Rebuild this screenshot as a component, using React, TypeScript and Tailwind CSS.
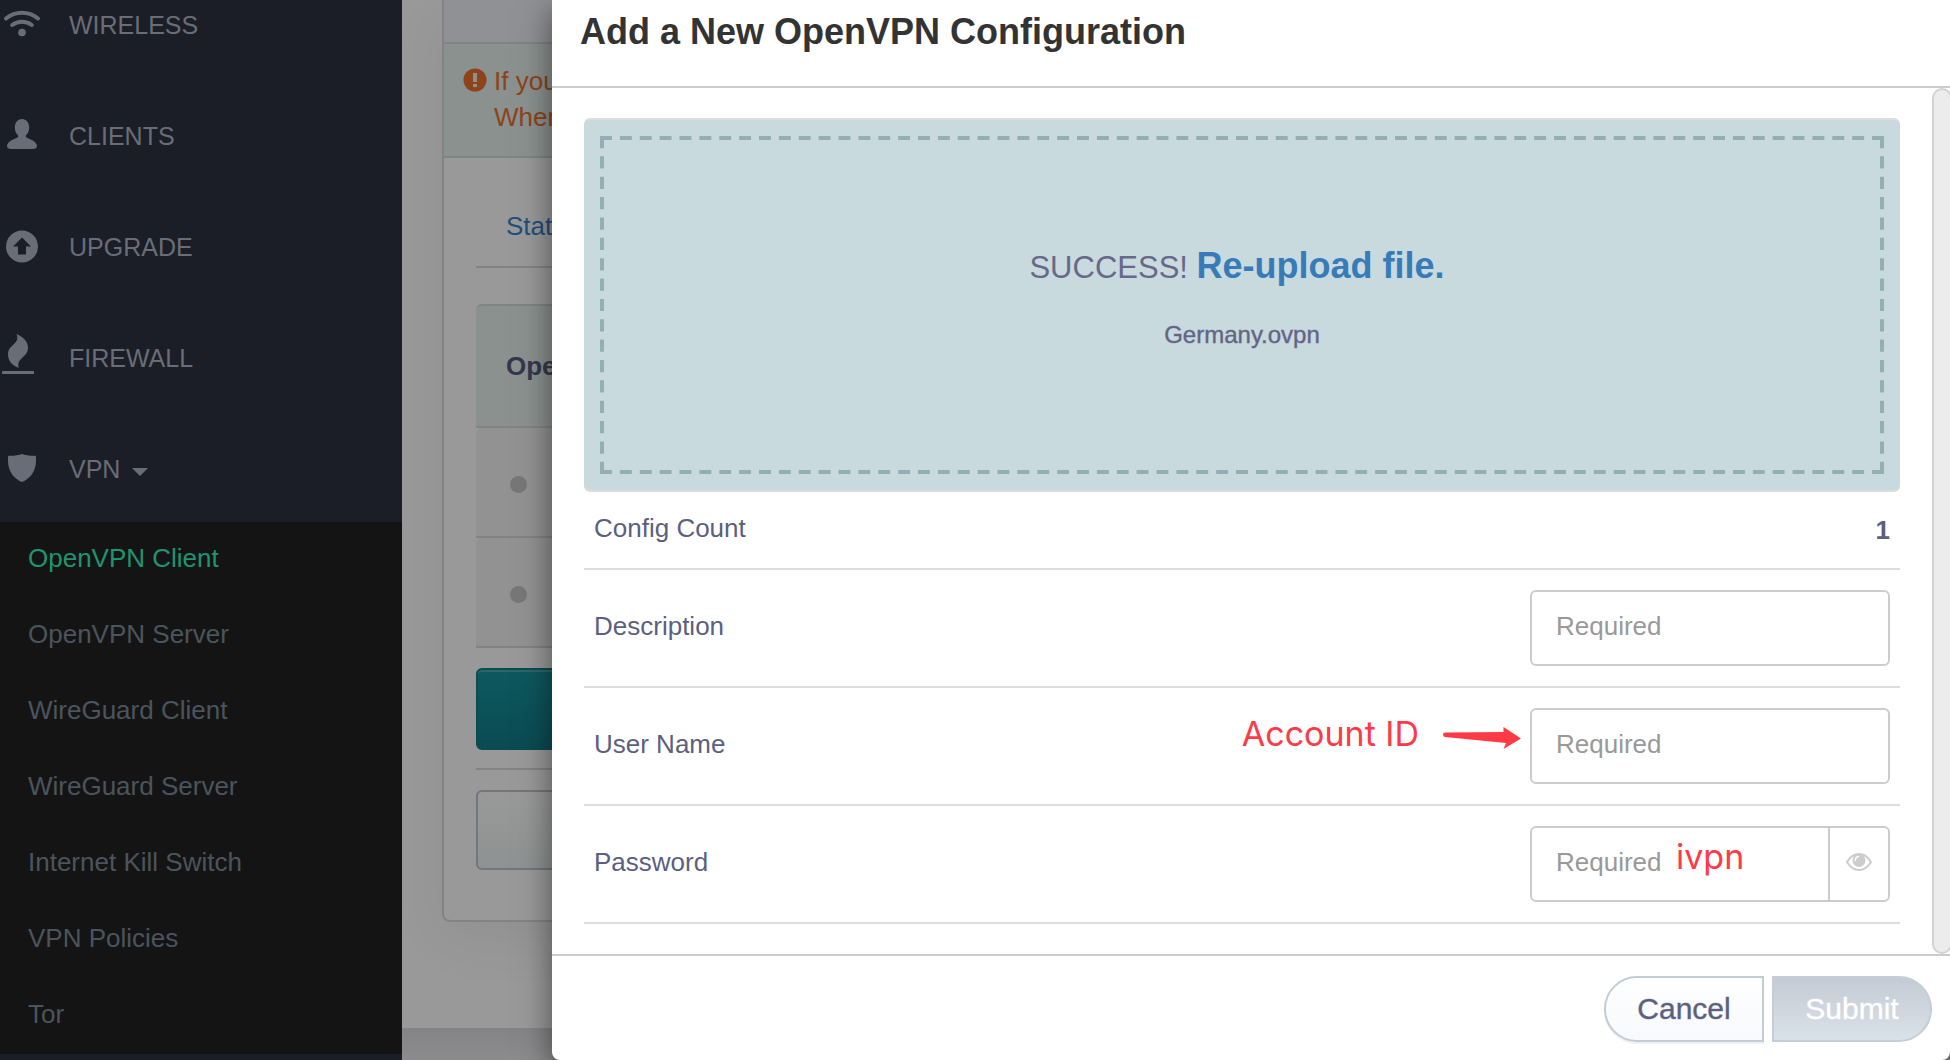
import React from "react";

type IconProps = { children: React.ReactNode };

function NavIcon({ children }: IconProps) {
  return (
    <svg viewBox="0 0 44 44" className="size-11 shrink-0 fill-current" aria-hidden="true">
      {children}
    </svg>
  );
}

const navItems = [
  {
    label: "WIRELESS",
    icon: (
      <g fill="none" stroke="currentColor" strokeLinecap="round">
        <path d="M6 17.500A25 25 0 0 1 38 17.500" strokeWidth="4" />
        <path d="M12.200 24A16 16 0 0 1 31.800 24" strokeWidth="4" />
        <circle cx="22" cy="31.500" r="3.800" fill="currentColor" stroke="none" />
      </g>
    ),
  },
  {
    label: "CLIENTS",
    icon: (
      <path d="M22 7C26.600 7 29.200 10.800 29.200 15.500C29.200 19 27.800 22 25.800 23.500C25.600 25 26.400 25.800 28 26.300C32.500 27.800 37 31 37 34C37 36 35.500 37 33 37H11C8.500 37 7 36 7 34C7 31 11.500 27.800 16 26.300C17.600 25.800 18.400 25 18.200 23.500C16.200 22 14.800 19 14.800 15.500C14.800 10.800 17.400 7 22 7Z" />
    ),
  },
  {
    label: "UPGRADE",
    icon: (
      <path
        fillRule="evenodd"
        d="M22 7.500A16 16 0 1 1 22 39.500A16 16 0 1 1 22 7.500ZM22 14.500L13 23.500H18V31.500H26V23.500H31Z"
      />
    ),
  },
  {
    label: "FIREWALL",
    icon: (
      <>
        <path d="M16.500 0C24 3.500 28 8 28 13.500C28 24 16 23.500 18.800 34C11.500 31 8 26.500 8 20.500C8 10 20.500 10.500 16.500 0Z" />
        <rect x="2" y="37" width="32" height="3" rx="0.500" />
      </>
    ),
  },
  {
    label: "VPN",
    icon: (
      <path d="M22 9C25 10.300 31 11 35 10.800Q36 10.800 36 12V16C36 26 30 34 22 37C14 34 8 26 8 16V12Q8 10.800 9 10.800C13 11 19 10.300 22 9Z" />
    ),
  },
];

const vpnItems = [
  "OpenVPN Client",
  "OpenVPN Server",
  "WireGuard Client",
  "WireGuard Server",
  "Internet Kill Switch",
  "VPN Policies",
  "Tor",
];

function Sidebar() {
  return (
    <nav className="w-[402px] shrink-0 bg-[#1b1e26]">
      <ul className="-mt-8">
        {navItems.map((item, i) => (
          <li key={item.label}>
            <a
              href="#"
              className={
                i === 0
                  ? "flex h-[110px] items-center gap-[25px] text-[25px] text-[#696d77]"
                  : "flex h-[111px] items-center gap-[25px] text-[25px] text-[#696d77]"
              }
            >
              <NavIcon>{item.icon}</NavIcon>
              <span className="flex items-center gap-3 pt-1.5">
                {item.label}
                {item.label === "VPN" && (
                  <svg viewBox="0 0 16 8" className="mt-1 h-2 w-4 fill-current" aria-hidden="true">
                    <path d="M0 0H16L8 8Z" />
                  </svg>
                )}
              </span>
            </a>
          </li>
        ))}
      </ul>
      <ul className="bg-[#141414]">
        {vpnItems.map((label, i) => (
          <li key={label}>
            <a
              href="#"
              className={
                i === 0
                  ? "flex h-[76px] items-center pb-1 pl-7 text-[26px] text-[#1f9471]"
                  : "flex h-[76px] items-center pb-1 pl-7 text-[26px] text-[#4b545d]"
              }
            >
              {label}
            </a>
          </li>
        ))}
      </ul>
    </nav>
  );
}

function ClientPage() {
  return (
    <main className="flex min-w-0 flex-1 flex-col bg-[#999999]">
      <section className="ml-10 rounded-bl-lg border-b-2 border-l-2 border-[#838383] bg-[#999999] pb-[50px] shadow-[0_16px_60px_rgba(0,0,0,0.06)]">
        <div className="h-11 border-b-2 border-[#7b8685] bg-[#909194]" />
        <div className="flex h-[114px] gap-[7px] border-b-2 border-[#7b8685] bg-[#8a918f] pl-[19px] pt-[19px] text-[26px] leading-9 text-[#8e431a]">
          <svg viewBox="0 0 24 24" className="mt-[5px] size-6 shrink-0" aria-hidden="true">
            <circle cx="12" cy="12" r="11.500" fill="#8e431a" />
            <rect x="10" y="5" width="4" height="9" fill="#8a918f" />
            <rect x="10" y="16" width="4" height="3" fill="#8a918f" />
          </svg>
          <p>
            If you
            <br />
            When
          </p>
        </div>
        <div className="pl-8">
          <div className="flex h-[110px] items-center border-b-2 border-[#838383] pl-[30px] pt-7 text-[26px]">
            <a href="#" className="text-[#1f4f7c]">
              Status
            </a>
          </div>
          <table className="mt-9 w-full border-separate border-spacing-0">
            <thead>
              <tr>
                <th className="h-[124px] rounded-tl-md border-y-2 border-[#838383] bg-[#8a918f] pl-[30px] text-left text-[26px] text-[#35374d]">
                  OpenVPN
                </th>
              </tr>
            </thead>
            <tbody>
              {[1, 2].map((row) => (
                <tr key={row}>
                  <td className="h-[110px] rounded-tl-md border-b-2 border-[#838383] bg-[#929292] pl-[34px] pt-1">
                    <span className="block size-[17px] rounded-full bg-[#777777]" />
                  </td>
                </tr>
              ))}
            </tbody>
          </table>
          <div className="border-b-2 border-[#838383] pb-[18px] pt-5">
            <button
              type="button"
              aria-label="Add configuration"
              className="block h-[82px] w-full rounded-md border-2 border-[#0a4c51] bg-linear-to-b from-[#0d595f] to-[#0b4b52] shadow-[inset_0_2px_0_#2b666b]"
            />
          </div>
          <button
            type="button"
            aria-label="Refresh"
            className="mt-5 block h-20 w-full rounded-md border-2 border-[#71777c] bg-linear-to-b from-[#999999] to-[#8f9292]"
          />
        </div>
      </section>
      <footer className="mt-[106px] flex-1 bg-linear-to-b from-[#848486] to-[#8c8c8e]" />
    </main>
  );
}

const inputClass =
  "h-[76px] w-[360px] rounded-md border-2 border-[#cccccc] bg-white px-6 pb-1 text-[26px] text-[#555555] outline-none placeholder:text-[#999999]";
const rowClass = "flex items-center border-b-2 border-[#dddddd] px-[10px] py-5 text-[26px] text-[#5b5f80]";

function DashedFrame() {
  return (
    <svg className="absolute inset-0 size-full" stroke="#93afb3" strokeWidth="8" strokeDasharray="12 8" aria-hidden="true">
      <line x1="0" y1="0" x2="100%" y2="0" pathLength="1292" />
      <line x1="0" y1="100%" x2="100%" y2="100%" pathLength="1292" />
      <line x1="0" y1="0" x2="0" y2="100%" pathLength="332" />
      <line x1="100%" y1="0" x2="100%" y2="100%" pathLength="332" />
    </svg>
  );
}

function ConfigDialog() {
  return (
    <div
      role="dialog"
      aria-labelledby="dialog-title"
      className="absolute left-[552px] right-0 top-0 overflow-hidden rounded-b-lg bg-white"
    >
      <header className="border-b-2 border-[#cccccc] pb-[34px] pl-7 pt-3">
        <h1 id="dialog-title" className="text-[36px] font-bold leading-10 text-[#333333]">
          Add a New OpenVPN Configuration
        </h1>
      </header>

      <div className="flex">
        <form className="min-w-0 flex-1 px-8 py-[30px]">
          <div className="rounded-md border-y-2 border-[#dddddd] bg-[#c9dadf] p-4">
            <div className="relative flex h-[338px] flex-col items-center justify-center pb-[18px]">
              <DashedFrame />
              <p className="relative pr-[10px] text-[31px] leading-[52px] text-[#676989]">
                SUCCESS!{" "}
                <a href="#" className="text-[36px] font-bold text-[#377cb8]">
                  Re-upload file.
                </a>
              </p>
              <p className="relative mt-6 text-[24px] font-medium leading-[34px] text-[#626484] [-webkit-text-stroke:1px_rgba(98,100,132,0.4)]">
                Germany.ovpn
              </p>
            </div>
          </div>

          <div className="flex h-[78px] items-center justify-between border-b-2 border-[#dddddd] px-[10px] pb-1 text-[26px] text-[#5b5f80]">
            <label htmlFor="config-count">Config Count</label>
            <output id="config-count" className="pt-1 font-bold">
              1
            </output>
          </div>

          <div className={rowClass}>
            <label htmlFor="description" className="pb-1">
              Description
            </label>
            <input id="description" type="text" placeholder="Required" className={inputClass + " ml-auto"} />
          </div>

          <div className={rowClass}>
            <label htmlFor="username" className="pb-1">
              User Name
            </label>
            <div className="ml-auto mr-[9px] flex items-center gap-6 pb-6 text-[#ff3a47]">
              <span className="font-[Inter] text-[34px] leading-10">Account ID</span>
              <svg viewBox="0 0 78 24" className="mt-2 h-6 w-[78px] fill-current" aria-hidden="true">
                <path d="M2 6.500L60.500 6L60.500 1L78 12.500L60.500 23L63 17L2 11Q0 10.500 0 8.700Q0 6.800 2 6.500Z" />
              </svg>
            </div>
            <input id="username" type="text" placeholder="Required" className={inputClass} />
          </div>

          <div className={rowClass}>
            <label htmlFor="password" className="pb-1">
              Password
            </label>
            <div className="relative ml-auto">
              <input id="password" type="password" placeholder="Required" className={inputClass + " block"} />
              <span className="pointer-events-none absolute left-[146px] top-[11px] font-[Inter] text-[34px] leading-10 text-[#ff3a47]">
                ivpn
              </span>
              <button
                type="button"
                aria-label="Show password"
                className="absolute inset-y-0.5 right-0.5 flex w-[60px] items-center justify-center border-l-2 border-[#cccccc] pb-1 text-[#cccccc]"
              >
                <svg viewBox="0 0 26 18" className="h-[18px] w-[26px]" aria-hidden="true">
                  <path d="M1 9Q6 1 13 1T25 9Q20 17 13 17T1 9Z" fill="none" stroke="currentColor" strokeWidth="2" />
                  <circle cx="13" cy="7.500" r="6.500" fill="currentColor" />
                  <path d="M9.300 7.500Q9.300 4 12.500 3.500" fill="none" stroke="white" strokeWidth="1.500" strokeLinecap="round" />
                </svg>
              </button>
            </div>
          </div>
        </form>
        <div className="w-[18px] overflow-hidden">
          <div className="h-full w-5 rounded-full border-2 border-[#d3d3d3] bg-[#ececec]" />
        </div>
      </div>

      <footer className="flex justify-end gap-2 border-t-2 border-[#cccccc] pb-[18px] pr-[18px] pt-5 text-[30px] font-medium">
        <button
          type="button"
          className="h-[66px] w-40 rounded-l-full border-2 border-[#c2ccd5] bg-linear-to-b from-white to-[#f7f9fc] pb-0.5 text-[#5b5f80] shadow-[0_2px_0_#f1f1f1] [-webkit-text-stroke:1px_rgba(91,95,128,0.4)]"
        >
          Cancel
        </button>
        <button
          type="submit"
          disabled
          className="h-[66px] w-40 rounded-r-full border-2 border-[#c5ced7] bg-linear-to-b from-[#c4cbd4] to-[#d9e1e9] pb-0.5 text-white [-webkit-text-stroke:1px_rgba(255,255,255,0.4)]"
        >
          Submit
        </button>
      </footer>
    </div>
  );
}

export default function App() {
  return (
    <div className="relative flex min-h-screen overflow-hidden font-['Liberation_Sans',Arial,sans-serif]">
      <Sidebar />
      <ClientPage />
      <div className="absolute inset-y-0 left-[552px] right-0 bg-[#6b6b6b] shadow-[0_10px_30px_rgba(0,0,0,0.5)]" />
      <ConfigDialog />
    </div>
  );
}
